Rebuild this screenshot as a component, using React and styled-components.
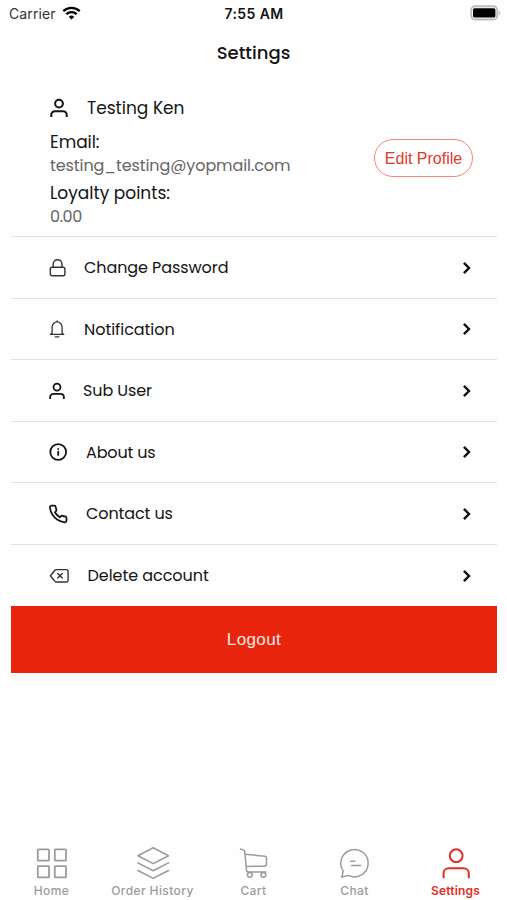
import React from 'react';
import styled, { createGlobalStyle } from 'styled-components';

const GlobalStyle = createGlobalStyle`
  * {
    box-sizing: border-box;
  }
  body {
    margin: 0;
    background: #fefefe;
  }
`;

const Screen = styled.div`
  display: flex;
  flex-direction: column;
  width: 507px;
  height: 900px;
  overflow: hidden;
  background: #fefefe;
  color: #141414;
  font-family: Poppins, Inter, sans-serif;
  svg {
    display: block;
    flex: none;
    fill: none;
    stroke: currentColor;
    stroke-linecap: round;
    stroke-linejoin: round;
  }
`;

const StatusBar = styled.header`
  display: grid;
  grid-template-columns: 1fr auto 1fr;
  align-items: center;
  height: 28px;
  padding: 0 6px 2px 9px;
  font-family: Inter, sans-serif;
  font-size: 14px;
`;

const Carrier = styled.div`
  display: flex;
  align-items: center;
  gap: 6px;
  color: #333;
`;

const Clock = styled.div`
  font-weight: 600;
  letter-spacing: 0.4px;
  transform: translateX(-1px);
`;

const Battery = styled.div`
  display: flex;
  justify-content: flex-end;
`;

const Title = styled.h1`
  margin: 0;
  height: 50px;
  line-height: 50px;
  text-align: center;
  font-size: 18px;
  font-weight: 500;
`;

const Label = styled.span`
  white-space: nowrap;
  letter-spacing: ${props => props.$spacing || 0}px;
`;

const Content = styled.main`
  padding: 0 10px 0 11px;
`;

const Profile = styled.section`
  display: flex;
  justify-content: space-between;
  align-items: center;
  height: 159px;
  padding: 0 24px 0 39px;
  border-bottom: 1px solid #e2e2e2;
`;

const Details = styled.div`
  height: 100%;
  padding-top: 16px;
  font-size: 17px;
`;

const Name = styled.div`
  display: flex;
  align-items: center;
  gap: 19px;
  height: 27px;
  margin-bottom: 9px;
`;

const Field = styled.div`
  height: 51px;
  line-height: 24px;
`;

const Value = styled.div`
  color: #666;
  font-size: 16px;
  line-height: 23px;
`;

const EditButton = styled.button`
  width: 99px;
  height: 38px;
  margin-top: 2px;
  padding: 1px 0 0;
  border: 1px solid #f0877d;
  border-radius: 19px;
  background: transparent;
  color: #e2382b;
  font-family: 'Liberation Sans', sans-serif;
  font-size: 16px;
`;

const Row = styled.div`
  display: flex;
  align-items: center;
  height: 61.5px;
  padding: 1px 23px 0 38px;
  border-bottom: ${props => (props.$last ? '0' : '1px solid #e2e2e2')};
  font-size: 16px;
  > span {
    flex: 1;
    margin-left: ${props => props.$gap}px;
  }
`;

const Logout = styled.button`
  display: block;
  width: 100%;
  height: 67px;
  padding: 1px 0 0;
  border: 0;
  background: #e8250c;
  color: #ffe9e5;
  font-family: 'Liberation Sans', sans-serif;
  font-size: 17px;
  letter-spacing: 0.4px;
`;

const TabBar = styled.nav`
  display: grid;
  grid-template-columns: repeat(5, 101px);
  height: 60px;
  margin-top: auto;
  padding-left: 1px;
`;

const Tab = styled.div`
  display: flex;
  flex-direction: column;
  align-items: center;
  gap: 3px;
  padding-top: 6px;
  color: ${props => (props.$active ? '#df2f25' : '#9c9c9c')};
  font-family: Inter, sans-serif;
  font-size: 12px;
  font-weight: ${props => (props.$active ? 600 : 500)};
  line-height: 15px;
`;

const UserIcon = ({ size = 18 }) => (
  <svg width={size} height={size + 2} viewBox="0 0 18 20" strokeWidth="2" style={{ strokeLinecap: 'butt' }}>
    <circle cx="9" cy="5.6" r="3.9" />
    <path d="M1.3 19v-2.2a3.6 3.6 0 0 1 3.6-3.6h8.2a3.6 3.6 0 0 1 3.6 3.6V19" />
  </svg>
);

const LockIcon = () => (
  <svg width="18" height="20" viewBox="0 0 18 20" strokeWidth="1.4" color="#333">
    <rect x="1.3" y="9.2" width="14.6" height="8.6" rx="1.8" />
    <path d="M4.2 9V6.2a4.4 4.4 0 0 1 8.8 0V9" />
  </svg>
);

const BellIcon = () => (
  <svg width="18" height="20" viewBox="0 0 18 20" strokeWidth="1.3" color="#333">
    <path d="M3.1 14V8.2a5 5.3 0 0 1 10 0V14l1.7 1.4H1.4zM8.1 1.8v.8M6.3 17.8h3.6" />
  </svg>
);

const InfoIcon = () => (
  <svg width="20" height="20" viewBox="0 0 20 20" strokeWidth="1.8">
    <circle cx="9.2" cy="10" r="7.9" />
    <path d="M9.2 9.7v3.2" />
    <path d="M9.2 7v.1" />
  </svg>
);

const PhoneIcon = () => (
  <svg width="20" height="20" viewBox="1 0 24 24" strokeWidth="2.1">
    <path d="M22 16.92v3a2 2 0 0 1-2.18 2 19.8 19.8 0 0 1-8.63-3.07 19.5 19.5 0 0 1-6-6A19.8 19.8 0 0 1 2.12 4.18 2 2 0 0 1 4.11 2h3a2 2 0 0 1 2 1.72c.13.96.36 1.9.7 2.81a2 2 0 0 1-.45 2.11L8.09 9.91a16 16 0 0 0 6 6l1.27-1.27a2 2 0 0 1 2.11-.45c.91.34 1.85.57 2.81.7A2 2 0 0 1 22 16.92z" />
  </svg>
);

const DeleteIcon = () => (
  <svg width="21" height="18" viewBox="0 0 21 18" strokeWidth="1.4" color="#333">
    <path d="M7.3 2.6h10a1.8 1.8 0 0 1 1.8 1.8v8.8a1.8 1.8 0 0 1-1.8 1.8h-10c-.6 0-1-.2-1.4-.6L1.4 8.8l4.5-5.6c.4-.4.8-.6 1.4-.6zM8.7 6.5l4.6 4.6M13.3 6.5l-4.6 4.6" />
  </svg>
);

const Chevron = () => (
  <svg width="14" height="16" viewBox="0 0 14 16" strokeWidth="2.4" color="#111" style={{ strokeLinecap: 'butt', strokeLinejoin: 'miter' }}>
    <path d="M3.9 2.8 9 8l-5.1 5.2" />
  </svg>
);

const WifiIcon = () => (
  <svg width="19" height="14" viewBox="0 0 18 14" strokeWidth="2.3" color="#000" style={{ strokeLinecap: 'butt' }}>
    <path d="M.8 5.1a11.8 11.8 0 0 1 16.4 0M3.8 8.2a7.5 7.5 0 0 1 10.4 0" />
    <path d="M9 13.4 6.3 10.7a3.9 3.9 0 0 1 5.4 0z" fill="currentColor" stroke="none" />
  </svg>
);

const BatteryIcon = () => (
  <svg width="31" height="16" viewBox="0 0 31 16">
    <rect x="1.2" y="1.3" width="26" height="13.2" rx="3.8" stroke="#bdbdbd" strokeWidth="1.9" />
    <rect x="3" y="3.3" width="22.4" height="9.2" rx="1.5" fill="#000" stroke="none" />
    <path d="M28.8 5.8c2 .8 2 3.6 0 4.4z" fill="#b9b9b9" stroke="none" />
  </svg>
);

const HomeIcon = () => (
  <svg width="34" height="34" viewBox="0 0 34 34" strokeWidth="1.8">
    <rect x="2.8" y="3.4" width="11.2" height="11.2" rx=".6" />
    <rect x="19.8" y="3.4" width="11.2" height="11.2" rx=".6" />
    <rect x="2.8" y="20.2" width="11.2" height="11.2" rx=".6" />
    <rect x="19.8" y="20.2" width="11.2" height="11.2" rx=".6" />
  </svg>
);

const LayersIcon = () => (
  <svg width="34" height="34" viewBox="0 0 34 34" strokeWidth="1.6">
    <path d="M17.2 1.8 32.5 9.7l-15.3 7.9L1.9 9.7zM1.9 16.9l15.3 7.9 15.3-7.9M1.9 24.5l15.3 7.9 15.3-7.9" />
  </svg>
);

const CartIcon = () => (
  <svg width="34" height="34" viewBox="0 0 34 34" strokeWidth="1.5">
    <path d="M3.5 3 6.6 4.1Q7.6 4.5 7.8 5.7L9.4 23.5c.1 1.7.8 2.6 2.3 2.6h17.1" />
    <path d="M8 8.2 28.1 10.3q1.4.2 1.4 1.5v6.5q0 1.8-1.8 1.9L9.2 20.5" />
    <circle cx="12.8" cy="28.8" r="2.4" />
    <circle cx="26.4" cy="28.8" r="2.4" />
  </svg>
);

const ChatIcon = () => (
  <svg width="34" height="34" viewBox="0 0 34 34" strokeWidth="1.5">
    <path d="M3.7 31.1 5.3 25.1A13.7 13.7 0 1 1 10.3 29.4zM12.7 15.2h4.2M13.5 19.4h9" />
  </svg>
);

const SettingsIcon = () => (
  <svg width="34" height="34" viewBox="0 0 34 34" strokeWidth="2" style={{ strokeLinecap: 'butt' }}>
    <circle cx="17.2" cy="9.7" r="6.4" />
    <path d="M4.6 32.2v-5a5 5 0 0 1 5-5h15.2a5 5 0 0 1 5 5v5" />
  </svg>
);

const items = [
  { text: 'Change Password', icon: <LockIcon />, gap: 17, spacing: -0.08 },
  { text: 'Notification', icon: <BellIcon />, gap: 17, spacing: -0.05 },
  { text: 'Sub User', icon: <UserIcon size={16} />, gap: 18, spacing: -0.1 },
  { text: 'About us', icon: <InfoIcon />, gap: 17, spacing: -0.15 },
  { text: 'Contact us', icon: <PhoneIcon />, gap: 17, spacing: -0.1 },
  { text: 'Delete account', icon: <DeleteIcon />, gap: 17.5, spacing: -0.05 },
];

const tabs = [
  { text: 'Home', icon: <HomeIcon />, spacing: 0.4 },
  { text: 'Order History', icon: <LayersIcon />, spacing: 0.4 },
  { text: 'Cart', icon: <CartIcon />, spacing: 0.4 },
  { text: 'Chat', icon: <ChatIcon />, spacing: 0.4 },
  { text: 'Settings', icon: <SettingsIcon />, active: true, spacing: 0.2 },
];

const App = () => (
  <>
    <GlobalStyle />
    <Screen>
      <StatusBar>
        <Carrier>
          <Label $spacing={0.1}>Carrier</Label>
          <WifiIcon />
        </Carrier>
        <Clock>7:55 AM</Clock>
        <Battery>
          <BatteryIcon />
        </Battery>
      </StatusBar>
      <Title>
        <Label>Settings</Label>
      </Title>
      <Content>
        <Profile>
          <Details>
            <Name>
              <UserIcon />
              <Label>Testing Ken</Label>
            </Name>
            <Field>
              <Label $spacing={-0.05}>Email:</Label>
              <Value>
                <Label $spacing={-0.09}>testing_testing@yopmail.com</Label>
              </Value>
            </Field>
            <Field>
              <Label>Loyalty points:</Label>
              <Value>
                <Label $spacing={-0.4}>0.00</Label>
              </Value>
            </Field>
          </Details>
          <EditButton>Edit Profile</EditButton>
        </Profile>
        {items.map((item, i) => (
          <Row key={item.text} $gap={item.gap} $last={i === items.length - 1}>
            {item.icon}
            <Label $spacing={item.spacing}>{item.text}</Label>
            <Chevron />
          </Row>
        ))}
        <Logout>Logout</Logout>
      </Content>
      <TabBar>
        {tabs.map(tab => (
          <Tab key={tab.text} $active={tab.active}>
            {tab.icon}
            <Label $spacing={tab.spacing}>{tab.text}</Label>
          </Tab>
        ))}
      </TabBar>
    </Screen>
  </>
);

export default App;
